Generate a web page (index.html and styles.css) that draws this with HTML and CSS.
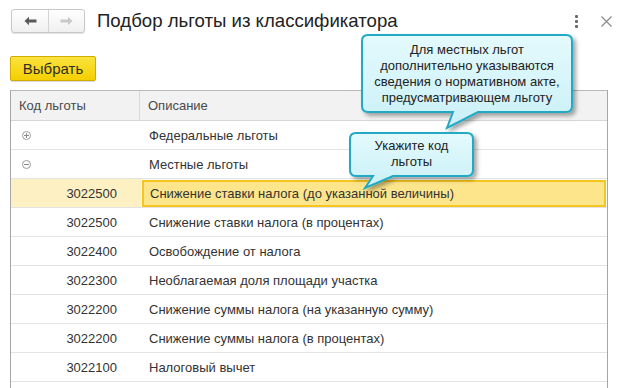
FILE: index.html
```html
<!DOCTYPE html>
<html lang="ru">
<head>
<meta charset="utf-8">
<title>Подбор льготы из классификатора</title>
<link rel="stylesheet" href="styles.css">
</head>
<body>
<div class="window">
  <header class="titlebar">
    <div class="nav">
      <span class="nav-btn">
        <svg width="13" height="10" viewBox="0 0 13 10"><path d="M0.5 5 L5 0.8 V3.4 H12.5 V6.6 H5 V9.2 Z" fill="#5a5a5a"/></svg>
      </span>
      <span class="nav-btn">
        <svg width="13" height="10" viewBox="0 0 13 10"><path d="M12.5 5 L8 0.8 V3.4 H0.5 V6.6 H8 V9.2 Z" fill="#c9c9c9"/></svg>
      </span>
    </div>
    <h1 class="title">Подбор льготы из классификатора</h1>
    <span class="kebab"><i></i><i></i><i></i></span>
    <span class="close">
      <svg width="11" height="11" viewBox="0 0 11 11"><path d="M0.5 0.5 L10.5 10.5 M10.5 0.5 L0.5 10.5" stroke="#8a8a8a" stroke-width="1.2"/></svg>
    </span>
  </header>

  <div class="toolbar">
    <button class="btn-primary">Выбрать</button>
  </div>

  <div class="table">
    <div class="thead">
      <div class="th th-code">Код льготы</div>
      <div class="th">Описание</div>
    </div>
    <div class="row">
      <div class="cell cell-code"><span class="tree plus"></span></div>
      <div class="cell">Федеральные льготы</div>
    </div>
    <div class="row">
      <div class="cell cell-code"><span class="tree minus"></span></div>
      <div class="cell">Местные льготы</div>
    </div>
    <div class="row selected">
      <div class="cell cell-code num">3022500</div>
      <div class="cell cell-current">Снижение ставки налога (до указанной величины)</div>
    </div>
    <div class="row">
      <div class="cell cell-code num">3022500</div>
      <div class="cell">Снижение ставки налога (в процентах)</div>
    </div>
    <div class="row">
      <div class="cell cell-code num">3022400</div>
      <div class="cell">Освобождение от налога</div>
    </div>
    <div class="row">
      <div class="cell cell-code num">3022300</div>
      <div class="cell">Необлагаемая доля площади участка</div>
    </div>
    <div class="row">
      <div class="cell cell-code num">3022200</div>
      <div class="cell">Снижение суммы налога (на указанную сумму)</div>
    </div>
    <div class="row">
      <div class="cell cell-code num">3022200</div>
      <div class="cell">Снижение суммы налога (в процентах)</div>
    </div>
    <div class="row">
      <div class="cell cell-code num">3022100</div>
      <div class="cell">Налоговый вычет</div>
    </div>
    <div class="row">
      <div class="cell cell-code num"></div>
      <div class="cell"></div>
    </div>
  </div>

  <div class="callout callout-1">
    <svg class="bubble" width="230" height="105" viewBox="0 0 230 105">
      <defs>
        <linearGradient id="g1" x1="0" y1="0" x2="0" y2="1">
          <stop offset="0" stop-color="#e4fafd"/>
          <stop offset="1" stop-color="#c9f0f7"/>
        </linearGradient>
        <filter id="sh1" x="-10%" y="-10%" width="130%" height="140%">
          <feDropShadow dx="3" dy="3" stdDeviation="2" flood-color="#000" flood-opacity="0.35"/>
        </filter>
      </defs>
      <path d="M13,5 H211 Q217,5 217,11 V76 Q217,82 211,82 H123 L92,98 L98,82 H13 Q7,82 7,76 V11 Q7,5 13,5 Z" fill="url(#g1)" stroke="#22a9c4" stroke-width="2" filter="url(#sh1)"/>
    </svg>
    <div class="callout-text">Для местных льгот<br>дополнительно указываются<br>сведения о нормативном акте,<br>предусматривающем льготу</div>
  </div>

  <div class="callout callout-2">
    <svg class="bubble" width="140" height="65" viewBox="0 0 140 65">
      <defs>
        <linearGradient id="g2" x1="0" y1="0" x2="0" y2="1">
          <stop offset="0" stop-color="#e4fafd"/>
          <stop offset="1" stop-color="#c9f0f7"/>
        </linearGradient>
        <filter id="sh2" x="-10%" y="-10%" width="130%" height="150%">
          <feDropShadow dx="3" dy="3" stdDeviation="2" flood-color="#000" flood-opacity="0.35"/>
        </filter>
      </defs>
      <path d="M10,4 H121 Q127,4 127,10 V41 Q127,47 121,47 H47 L19,59 L27,47 H10 Q4,47 4,41 V10 Q4,4 10,4 Z" fill="url(#g2)" stroke="#22a9c4" stroke-width="2" filter="url(#sh2)"/>
    </svg>
    <div class="callout-text">Укажите код<br>льготы</div>
  </div>
</div>
</body>
</html>
```

FILE: styles.css
```css
* { box-sizing: border-box; }

html, body {
  margin: 0;
  padding: 0;
  background: #fff;
  height: 100%;
  overflow: hidden;
}

body {
  font-family: "Liberation Sans", Arial, sans-serif;
  color: #333;
}

.window {
  position: relative;
  width: 627px;
  height: 388px;
  overflow: hidden;
}

/* title bar */
.titlebar {
  display: flex;
  align-items: center;
  height: 42px;
  padding: 9px 0 9px 11px;
}

.nav {
  display: flex;
  height: 24px;
  border: 1px solid #c8c8c8;
  border-radius: 3px;
  background: linear-gradient(#ffffff, #f0f0f0);
  box-shadow: 0 1px 1px rgba(0,0,0,0.12);
}

.nav-btn {
  width: 36px;
  display: flex;
  align-items: center;
  justify-content: center;
}

.nav-btn + .nav-btn {
  border-left: 1px solid #d4d4d4;
}

.title {
  margin: 0 0 0 12px;
  font-size: 18.6px;
  font-weight: normal;
  color: #222;
  line-height: 24px;
  flex: 1;
}

.kebab {
  display: flex;
  flex-direction: column;
  gap: 2px;
  width: 3px;
  margin-right: 23px;
}

.kebab i {
  display: block;
  width: 3px;
  height: 3px;
  background: #6a6a6a;
  border-radius: 1px;
}

.close {
  display: flex;
  margin-right: 15px;
}

/* toolbar */
.toolbar {
  display: flex;
  align-items: flex-start;
  padding: 14px 0 0 10px;
  height: 48px;
}

.btn-primary {
  height: 25px;
  width: 86px;
  border: 1px solid #d2ab00;
  border-radius: 2px;
  background: linear-gradient(#fbe33f, #f4cf00);
  font-family: "Liberation Sans", Arial, sans-serif;
  font-size: 15px;
  font-weight: normal;
  color: #2e2e2e;
  padding: 0;
  box-shadow: 0 1px 1px rgba(0,0,0,0.15);
}

/* table */
.table {
  margin-left: 10px;
  width: 598px;
  border: 1px solid #b8b8b8;
  border-left-color: #a6a6a6;
  border-right-color: #a6a6a6;
  border-bottom: none;
  font-size: 13px;
}

.thead {
  display: grid;
  grid-template-columns: 129px 1fr;
  height: 30px;
  background: #f2f2f2;
  border-bottom: 1px solid #d6d6d6;
}

.th {
  display: flex;
  align-items: center;
  padding-left: 8px;
  color: #4a4a4a;
}

.th-code {
  border-right: 1px solid #d9d9d9;
}

.row {
  display: grid;
  grid-template-columns: 130px 1fr;
  height: 29px;
  border-bottom: 1px solid #e3e3e3;
}

.cell {
  display: flex;
  align-items: center;
  padding-left: 8px;
  color: #333;
  white-space: nowrap;
}

.cell-code.num {
  justify-content: flex-end;
  padding-right: 24px;
}

.tree {
  position: relative;
  width: 9px;
  height: 9px;
  border: 1px solid #9a9a9a;
  border-radius: 50%;
  margin-left: 3px;
}

.tree::before,
.tree::after {
  content: "";
  position: absolute;
  background: #8a8a8a;
}

.tree::before {
  left: 1px;
  right: 1px;
  top: 3px;
  height: 1px;
}

.plus::after {
  top: 1px;
  bottom: 1px;
  left: 3px;
  width: 1px;
}

.minus::after { display: none; }

.selected .cell-code {
  background: #fdf0c3;
}

.cell-current {
  margin: 1px 1px 0 1px;
  border: 2px solid #f6c61e;
  background: #fde58c;
  padding-left: 6px;
}

/* callouts */
.callout {
  position: absolute;
}

.bubble {
  position: absolute;
  left: 0;
  top: 0;
}

.callout-text {
  position: relative;
  text-align: center;
  font-size: 13px;
  line-height: 16px;
  color: #222;
}

.callout-1 {
  left: 355px;
  top: 30px;
  width: 230px;
  height: 105px;
}

.callout-1 .callout-text {
  width: 210px;
  margin-left: 7px;
  padding-top: 12px;
}

.callout-2 {
  left: 346px;
  top: 129px;
  width: 140px;
  height: 65px;
}

.callout-2 .callout-text {
  width: 123px;
  margin-left: 4px;
  padding-top: 9px;
}
```
